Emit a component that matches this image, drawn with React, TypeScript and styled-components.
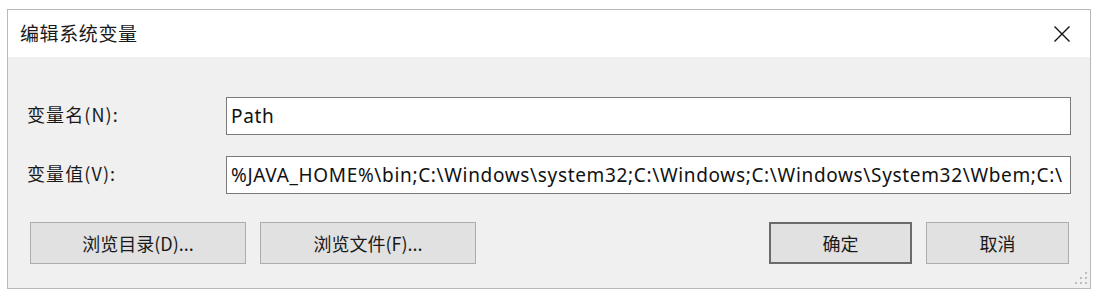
import styled, { createGlobalStyle } from "styled-components";

const GlobalStyle = createGlobalStyle`
  html, body {
    margin: 0;
    padding: 0;
    background: #fff;
  }
  body {
    font-family: "Noto Sans", "Noto Sans CJK SC", sans-serif;
    color: #000;
  }
`;

const Page = styled.div`
  padding: 9px 0 0 7px;
`;

const Window = styled.div`
  width: 1082px;
  height: 278px;
  border: 1px solid #b9b9b9;
  background: #f0f0f0;
  display: flex;
  flex-direction: column;
  position: relative;
`;

const TitleBar = styled.div`
  height: 47px;
  background: #fff;
  display: flex;
  align-items: center;
  justify-content: space-between;
  padding: 0 19px 0 12px;
`;

const Title = styled.div`
  font-family: "Noto Sans CJK SC", sans-serif;
  font-size: 19px;
  letter-spacing: 0.6px;
  color: #1a1a1a;
  margin-top: -2px;
`;

const Close = styled.button`
  border: none;
  background: transparent;
  padding: 0;
  width: 18px;
  height: 18px;
  display: flex;
  align-items: center;
  justify-content: center;
`;

const Body = styled.div`
  flex: 1;
  padding: 40px 19px 0 19px;
  display: flex;
  flex-direction: column;
`;

const Field = styled.div<{ $gap: number }>`
  display: grid;
  grid-template-columns: 199px 1fr;
  align-items: center;
  margin-bottom: ${(p) => p.$gap}px;
`;

const Label = styled.label`
  font-family: "Noto Sans CJK SC", sans-serif;
  font-size: 18px;
  letter-spacing: 1.1px;
  color: #1a1a1a;
  margin-top: -4px;
`;

const Input = styled.div`
  height: 36px;
  border: 1px solid #7a7a7a;
  background: #fff;
  font-family: "Noto Sans", "Noto Sans CJK SC", sans-serif;
  font-size: 19px;
  letter-spacing: 0.66px;
  line-height: 36px;
  padding-left: 4px;
  white-space: nowrap;
  overflow: hidden;
  color: #111;
`;

const Buttons = styled.div`
  display: flex;
  margin-top: 7px;
  padding: 0 2px 0 3px;
  gap: 14px;
`;

const Spacer = styled.div`
  flex: 1;
`;

const Button = styled.button<{ $w: number; $default?: boolean }>`
  width: ${(p) => p.$w}px;
  height: 42px;
  box-sizing: border-box;
  background: #e1e1e1;
  border: ${(p) => (p.$default ? "2px solid #6b6b6b" : "1px solid #adadad")};
  font-family: "Noto Sans CJK SC", sans-serif;
  font-size: 18px;
  color: #1a1a1a;
  padding: 0;
  margin-left: ${(p) => (p.$default ? 1 : 0)}px;
`;

const Grip = styled.svg`
  position: absolute;
  right: 3px;
  bottom: 4px;
`;

export default function App() {
  const dots = [
    [10, 0],
    [5, 5],
    [10, 5],
    [0, 10],
    [5, 10],
    [10, 10],
  ];
  return (
    <Page>
      <GlobalStyle />
      <Window>
        <TitleBar>
          <Title>编辑系统变量</Title>
          <Close aria-label="close">
            <svg width="18" height="18" viewBox="0 0 18 18">
              <path d="M1.5 1.5 L16.5 16.5 M16.5 1.5 L1.5 16.5" stroke="#111" strokeWidth="1.4" fill="none" />
            </svg>
          </Close>
        </TitleBar>
        <Body>
          <Field $gap={21}>
            <Label>变量名(N):</Label>
            <Input>Path</Input>
          </Field>
          <Field $gap={21}>
            <Label>变量值(V):</Label>
            <Input>%JAVA_HOME%\bin;C:\Windows\system32;C:\Windows;C:\Windows\System32\Wbem;C:\</Input>
          </Field>
          <Buttons>
            <Button $w={216}>浏览目录(D)...</Button>
            <Button $w={216}>浏览文件(F)...</Button>
            <Spacer />
            <Button $w={143} $default>确定</Button>
            <Button $w={143}>取消</Button>
          </Buttons>
        </Body>
        <Grip width="12" height="12" viewBox="0 0 12 12">
          {dots.map(([x, y], i) => (
            <rect key={i} x={x} y={y} width="2" height="2" fill="#bcbcbc" />
          ))}
        </Grip>
      </Window>
    </Page>
  );
}
